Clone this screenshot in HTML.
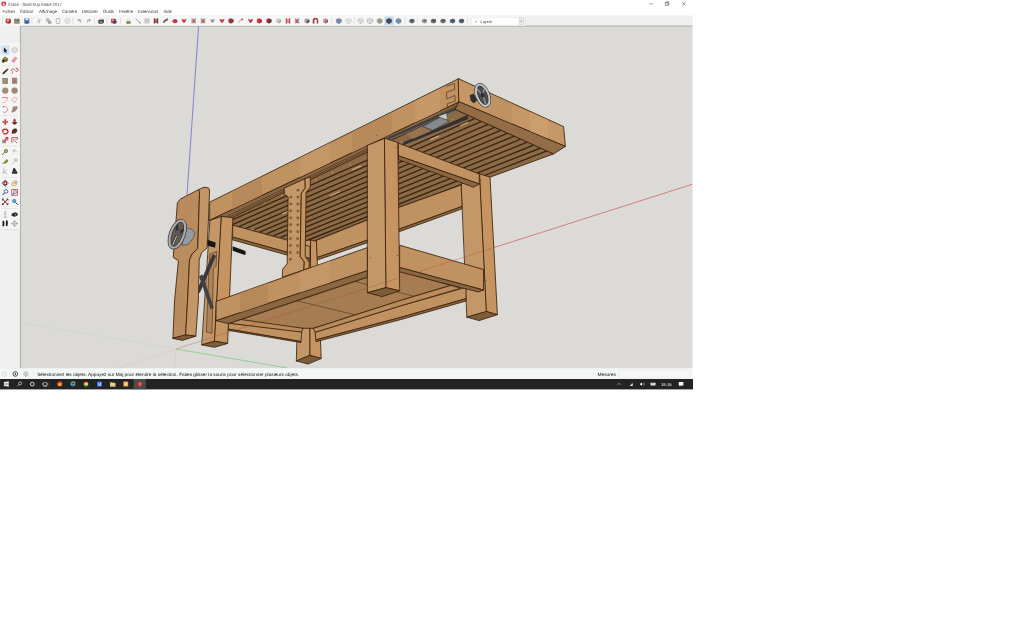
<!DOCTYPE html>
<html lang="fr"><head><meta charset="utf-8"><title>Établi - SketchUp Make 2017</title>
<style>
html,body{margin:0;padding:0;background:#fff}
body{width:1024px;height:621px;position:relative;overflow:hidden}
svg{position:absolute;left:0;top:0;display:block}
text{text-rendering:geometricPrecision;font-family:"Liberation Sans",sans-serif;fill:#2a2a2a}
.e{stroke:#3a220c;stroke-width:.85;stroke-linejoin:round;stroke-linecap:round}
</style></head><body>
<svg width="1024" height="621" viewBox="0 0 1024 621" style="opacity:.999">
<g id="chrome">
<rect x="0" y="0" width="692.4" height="15.5" fill="#fff"/>
<rect x="0" y="15.5" width="692.8" height="10.5" fill="#f0f0f0"/>
<rect x="0" y="26" width="20.5" height="342" fill="#f0f0f0"/>
<rect x="20" y="26" width="672.5" height="342" fill="#dbdad6"/>
<rect x="20" y="25.6" width="672.5" height=".9" fill="#a3a3a3"/>
<rect x="19.9" y="26" width=".8" height="342" fill="#a3a3a3"/>
<rect x="0" y="368" width="692.4" height="11" fill="#f5f6f6"/>
<rect x="0" y="379" width="693" height="10.4" fill="#232323"/>
</g>
<rect x="0" y="15.5" width="525.5" height="10.2" fill="#f6f6f6"/>
<rect x="0" y="43" width="19.9" height="187" fill="#f5f5f5"/>
<rect x="0" y="229.6" width="19.9" height=".5" fill="#d0d0d0"/>
<g id="title"><path d="M1.5 1.7h4.4v3.4l-2.1 1.5-2.3-1.3z" fill="#d8232a"/><path d="M2.7 2.8h2.1v.8h-1.3v.5h1.3v1.3h-2.1v-.8h1.3v-.4h-1.3z" fill="#fff" opacity=".9"/>
<g transform="translate(8.3 6.1) scale(0.3750)"><text x="0" y="0" font-size="12" textLength="142.7" lengthAdjust="spacingAndGlyphs" style="fill:#555">Établi - SketchUp Make 2017</text></g>
<path d="M649.2 3.8h3.6" stroke="#444" stroke-width=".5" fill="none"/>
<path d="M665.3 2.6h2.8v2.8h-2.8zM666 2.6v-.7h2.8v2.8h-.7" stroke="#333" stroke-width=".5" fill="none"/>
<path d="M682.1 2l3.4 3.4M685.5 2l-3.4 3.4" stroke="#333" stroke-width=".5" fill="none"/></g>
<g id="menu">
<g transform="translate(2.6 13.0) scale(0.3750)"><text x="0" y="0" font-size="12" textLength="33.1" lengthAdjust="spacingAndGlyphs" style="fill:#333">Fichier</text></g>
<g transform="translate(20.2 13.0) scale(0.3750)"><text x="0" y="0" font-size="12" textLength="34.9" lengthAdjust="spacingAndGlyphs" style="fill:#333">Édition</text></g>
<g transform="translate(39.0 13.0) scale(0.3750)"><text x="0" y="0" font-size="12" textLength="48.0" lengthAdjust="spacingAndGlyphs" style="fill:#333">Affichage</text></g>
<g transform="translate(62.0 13.0) scale(0.3750)"><text x="0" y="0" font-size="12" textLength="40.0" lengthAdjust="spacingAndGlyphs" style="fill:#333">Caméra</text></g>
<g transform="translate(82.0 13.0) scale(0.3750)"><text x="0" y="0" font-size="12" textLength="42.1" lengthAdjust="spacingAndGlyphs" style="fill:#333">Dessiner</text></g>
<g transform="translate(103.0 13.0) scale(0.3750)"><text x="0" y="0" font-size="12" textLength="29.3" lengthAdjust="spacingAndGlyphs" style="fill:#333">Outils</text></g>
<g transform="translate(119.0 13.0) scale(0.3750)"><text x="0" y="0" font-size="12" textLength="37.3" lengthAdjust="spacingAndGlyphs" style="fill:#333">Fenêtre</text></g>
<g transform="translate(138.0 13.0) scale(0.3750)"><text x="0" y="0" font-size="12" textLength="54.1" lengthAdjust="spacingAndGlyphs" style="fill:#333">Extensions</text></g>
<g transform="translate(163.6 13.0) scale(0.3750)"><text x="0" y="0" font-size="12" textLength="21.9" lengthAdjust="spacingAndGlyphs" style="fill:#333">Aide</text></g>
</g>
<g id="toolbar">
<g transform="translate(8.2 20.9) scale(.86) translate(-8.2 -20.9)" opacity=".88"><path d="M5.199999999999999 18.299999999999997h5.6l.6 .8v4l-2.6 1.2-3.6-1z" fill="#c5262c"/><path d="M6.799999999999999 19.5h2.2v1.8h-2.2z" fill="#f0d0d0"/><path d="M8.799999999999999 21.299999999999997l2.4-.6v2.4l-2.4 1z" fill="#8a1b20"/></g>
<g transform="translate(17 20.9) scale(.86) translate(-17 -20.9)" opacity=".88"><path d="M13.8 18.5h2.4l.8 1h3v4.4h-6.2z" fill="#6b6a3a"/><path d="M15.2 20.9h5.4l-1.4 3h-5.4z" fill="#8d8c52"/><path d="M17.6 17.9l2.4 1.4-2.4 1.4z" fill="#3a3a2a"/></g>
<g transform="translate(26.8 20.9) scale(.86) translate(-26.8 -20.9)" opacity=".88"><rect x="23.8" y="17.9" width="6" height="6" rx=".5" fill="#3465a8"/><rect x="25.0" y="17.9" width="3.6" height="2.2" fill="#dfe8f5"/><rect x="25.2" y="21.5" width="3.2" height="2.4" fill="#1e3f70"/></g>
<g transform="translate(39 20.9) scale(.86) translate(-39 -20.9)" opacity=".88"><path d="M36.4 22.5L41.6 19.299999999999997M38.4 17.9L39.8 23.9" stroke="#a8a8a8" stroke-width=".9" fill="none"/></g>
<g transform="translate(48.4 20.9) scale(.86) translate(-48.4 -20.9)" opacity=".88"><path d="M45.6 17.9h3l1 1v3h-4z" fill="#b4b4b4"/><path d="M47.8 20.299999999999997h3l1 1v3h-4z" fill="#9c9c9c"/></g>
<g transform="translate(58 20.9) scale(.86) translate(-58 -20.9)" opacity=".88"><rect x="56" y="18.099999999999998" width="4" height="5.8" rx=".5" fill="none" stroke="#a6a6a6" stroke-width=".9"/><rect x="57" y="17.599999999999998" width="2" height="1" fill="#a6a6a6"/></g>
<g transform="translate(67.5 20.9) scale(.86) translate(-67.5 -20.9)" opacity=".88"><circle cx="67.5" cy="20.9" r="2.9" fill="none" stroke="#ababab" stroke-width=".7"/><path d="M66.4 19.799999999999997l2.2 2.2m0-2.2l-2.2 2.2" stroke="#ababab" stroke-width=".7"/></g>
<g transform="translate(79.5 20.9) scale(.86) translate(-79.5 -20.9)" opacity=".88"><path d="M76.9 19.9l2.2-2v1.2c3 0 3.6 2.6 1.4 4.8.8-2-.2-2.8-1.4-2.8v1.2z" fill="#a9a9a9"/></g>
<g transform="translate(89 20.9) scale(.86) translate(-89 -20.9)" opacity=".88"><path d="M91.6 19.9l-2.2-2v1.2c-3 0-3.6 2.6-1.4 4.8-.8-2 .2-2.8 1.4-2.8v1.2z" fill="#a9a9a9"/></g>
<g transform="translate(101 20.9) scale(.86) translate(-101 -20.9)" opacity=".88"><path d="M97.8 20.299999999999997l2-1.6h3.6l1 1.4v3l-2 1.2h-3.8l-.8-1.2z" fill="#2d2d30"/><path d="M99.4 17.9h3.2l.6 1.8h-4.4z" fill="#d6d6d6"/><path d="M99.4 21.7h3.4v1.2h-3.4z" fill="#bdbdbd"/></g>
<g transform="translate(113.7 20.9) scale(.86) translate(-113.7 -20.9)" opacity=".88"><path d="M110.7 18.299999999999997h5l.8 .8v3.6l-2.2 1.4-3.6-.8z" fill="#c5262c"/><circle cx="115.10000000000001" cy="22.099999999999998" r="2.1" fill="#23305e"/><circle cx="112.7" cy="20.099999999999998" r=".9" fill="#f3d6d6"/></g>
<g transform="translate(128.5 20.9) scale(.86) translate(-128.5 -20.9)" opacity=".88"><rect x="126.1" y="20.7" width="4.8" height="3.2" fill="#a99a45"/><rect x="126.1" y="22.299999999999997" width="4.8" height="1.6" fill="#5c5a3a"/><path d="M127.3 20.7v-1.2a1.2 1.2 0 0 1 2.4 0v1.2" stroke="#d8cf8a" stroke-width=".7" fill="none"/></g>
<g transform="translate(138 20.9) scale(.86) translate(-138 -20.9)" opacity=".88"><path d="M135.2 18.5L140.4 23.099999999999998" stroke="#444" stroke-width=".6"/><rect x="139.8" y="22.5" width="1.2" height="1.2" fill="#333"/></g>
<g transform="translate(147 20.9) scale(.86) translate(-147 -20.9)" opacity=".88"><rect x="144" y="17.9" width="6" height="6" fill="#c9c9c9"/><path d="M144 19.9h6M144 21.9h6" stroke="#b4b4b4" stroke-width=".4"/></g>
<g transform="translate(156 20.9) scale(.86) translate(-156 -20.9)" opacity=".88"><path d="M153.4 17.9h1.6v6h-1.6zM157 17.9h1.6v6h-1.6z" fill="#4a2a2c"/><path d="M155 18.9h2v4.4h-2z" fill="#c3272d"/></g>
<g transform="translate(165.6 20.9) scale(.86) translate(-165.6 -20.9)" opacity=".88"><path d="M162.6 22.7c1-3 3-4.4 6-4.4l-.6 2c-2 .2-3.2 1.2-4 3z" fill="#4a2a2c"/><circle cx="167.4" cy="19.099999999999998" r="1.1" fill="#c3272d"/></g>
<g transform="translate(175 20.9) scale(.86) translate(-175 -20.9)" opacity=".88"><ellipse cx="175" cy="21.299999999999997" rx="3" ry="2.4" fill="#c3272d"/><ellipse cx="175.4" cy="20.299999999999997" rx="1.6" ry="1" fill="#8c1d22"/></g>
<g transform="translate(184 20.9) scale(.86) translate(-184 -20.9)" opacity=".88"><path d="M181 18.299999999999997l3 1.4 3-1.4-1 3-2 2.4-2-2.4z" fill="#c3272d"/><path d="M183 19.9h2l-1 2.6z" fill="#8c1d22"/></g>
<g transform="translate(193.7 20.9) scale(.86) translate(-193.7 -20.9)" opacity=".88"><path d="M191.1 17.9h1.6v6h-1.6zM194.7 17.9h1.6v6h-1.6z" fill="#9a9a9a"/><path d="M192.7 18.9h2v4.4h-2z" fill="#c3272d"/></g>
<g transform="translate(203 20.9) scale(.86) translate(-203 -20.9)" opacity=".88"><path d="M200.4 17.9h1.6v6h-1.6zM204 17.9h1.6v6h-1.6z" fill="#9a9a9a"/><path d="M202 18.9h2v4.4h-2z" fill="#c3272d"/></g>
<g transform="translate(212.5 20.9) scale(.86) translate(-212.5 -20.9)" opacity=".88"><path d="M209.5 18.299999999999997l3 1.4 3-1.4-1 3-2 2.4-2-2.4z" fill="#9a9a9a"/><path d="M211.5 19.9h2l-1 2.6z" fill="#777"/></g>
<g transform="translate(222 20.9) scale(.86) translate(-222 -20.9)" opacity=".88"><path d="M219 18.299999999999997l3 1.4 3-1.4-1 3-2 2.4-2-2.4z" fill="#c3272d"/><path d="M221 19.9h2l-1 2.6z" fill="#8c1d22"/></g>
<g transform="translate(231 20.9) scale(.86) translate(-231 -20.9)" opacity=".88"><path d="M228 18.9l2.6-1 3.2 1.2v3.2l-2.8 1.6-3-1.2z" fill="#8c1d22"/><path d="M230.8 21.099999999999998l3-1.4v2.6l-3 1.6z" fill="#4a2a2c"/></g>
<g transform="translate(240.6 20.9) scale(.86) translate(-240.6 -20.9)" opacity=".88"><path d="M237.6 22.7c1-3 3-4.4 6-4.4l-.6 2c-2 .2-3.2 1.2-4 3z" fill="#e6b3b5"/><circle cx="242.4" cy="19.099999999999998" r="1.1" fill="#c3272d"/></g>
<g transform="translate(250.6 20.9) scale(.86) translate(-250.6 -20.9)" opacity=".88"><path d="M247.6 18.299999999999997l3 1.4 3-1.4-1 3-2 2.4-2-2.4z" fill="#c3272d"/><path d="M249.6 19.9h2l-1 2.6z" fill="#8c1d22"/></g>
<g transform="translate(259.4 20.9) scale(.86) translate(-259.4 -20.9)" opacity=".88"><path d="M256.4 18.9l2.6-1 3.2 1.2v3.2l-2.8 1.6-3-1.2z" fill="#c3272d"/><path d="M259.2 21.099999999999998l3-1.4v2.6l-3 1.6z" fill="#8c1d22"/></g>
<g transform="translate(269 20.9) scale(.86) translate(-269 -20.9)" opacity=".88"><path d="M266 18.9l2.6-1 3.2 1.2v3.2l-2.8 1.6-3-1.2z" fill="#8c1d22"/><path d="M268.8 21.099999999999998l3-1.4v2.6l-3 1.6z" fill="#222"/></g>
<g transform="translate(278.7 20.9) scale(.86) translate(-278.7 -20.9)" opacity=".88"><path d="M275.7 18.9l2.6-1 3.2 1.2v3.2l-2.8 1.6-3-1.2z" fill="#c8c8c8"/><path d="M278.5 21.099999999999998l3-1.4v2.6l-3 1.6z" fill="#9a9a9a"/></g>
<g transform="translate(288 20.9) scale(.86) translate(-288 -20.9)" opacity=".88"><path d="M285.4 17.9h1.6v6h-1.6zM289 17.9h1.6v6h-1.6z" fill="#c3272d"/><path d="M287 18.9h2v4.4h-2z" fill="#9a9a9a"/></g>
<g transform="translate(297 20.9) scale(.86) translate(-297 -20.9)" opacity=".88"><path d="M294.4 17.9h1.6v6h-1.6zM298 17.9h1.6v6h-1.6z" fill="#9a9a9a"/><path d="M296 18.9h2v4.4h-2z" fill="#c3272d"/></g>
<g transform="translate(307 20.9) scale(.86) translate(-307 -20.9)" opacity=".88"><path d="M304 18.9l2.6-1 3.2 1.2v3.2l-2.8 1.6-3-1.2z" fill="#9a9a9a"/><path d="M306.8 21.099999999999998l3-1.4v2.6l-3 1.6z" fill="#4a2a2c"/></g>
<g transform="translate(315.6 20.9) scale(.86) translate(-315.6 -20.9)" opacity=".88"><path d="M312.6 23.9v-3.6a3 3 0 0 1 6 0v3.6h-1.6v-3.4a1.4 1.4 0 0 0-2.8 0v3.4z" fill="#8c1d22"/><path d="M312.6 23.9v-3.6a3 3 0 0 1 1-2.2" stroke="#4a2a2c" stroke-width=".6" fill="none"/></g>
<g transform="translate(325.6 20.9) scale(.86) translate(-325.6 -20.9)" opacity=".88"><path d="M322.6 18.9l2.6-1 3.2 1.2v3.2l-2.8 1.6-3-1.2z" fill="#9a9a9a"/><path d="M325.40000000000003 21.099999999999998l3-1.4v2.6l-3 1.6z" fill="#c3272d"/></g>
<g transform="translate(338.8 20.9) scale(.86) translate(-338.8 -20.9)" opacity=".88"><path d="M335.8 19.5l3-1.6 3 1.6v3l-3 1.6-3-1.6z" fill="#6f8aa6" stroke="#38506b" stroke-width=".45"/><path d="M335.8 19.5l3 1.4 3-1.4M338.8 20.9v3.2" stroke="#38506b" stroke-width=".5" fill="none"/></g>
<g transform="translate(348.6 20.9) scale(.86) translate(-348.6 -20.9)" opacity=".88"><path d="M345.6 19.5l3-1.6 3 1.6v3l-3 1.6-3-1.6z" fill="#f4f4f4" stroke="#9a9a9a" stroke-width=".45"/><path d="M345.6 19.5l3 1.4 3-1.4M348.6 20.9v3.2" stroke="#9a9a9a" stroke-width=".5" fill="none"/></g>
<g transform="translate(360.6 20.9) scale(.86) translate(-360.6 -20.9)" opacity=".88"><path d="M357.6 19.5l3-1.6 3 1.6v3l-3 1.6-3-1.6z" fill="#ededed" stroke="#8a8a8a" stroke-width=".45"/><path d="M357.6 19.5l3 1.4 3-1.4M360.6 20.9v3.2" stroke="#8a8a8a" stroke-width=".5" fill="none"/></g>
<g transform="translate(370 20.9) scale(.86) translate(-370 -20.9)" opacity=".88"><path d="M367 19.5l3-1.6 3 1.6v3l-3 1.6-3-1.6z" fill="#fafafa" stroke="#555" stroke-width=".45"/><path d="M367 19.5l3 1.4 3-1.4M370 20.9v3.2" stroke="#555" stroke-width=".5" fill="none"/></g>
<g transform="translate(379.7 20.9) scale(.86) translate(-379.7 -20.9)" opacity=".88"><path d="M376.7 19.5l3-1.6 3 1.6v3l-3 1.6-3-1.6z" fill="#9a9a8a" stroke="#6a6a5c" stroke-width=".45"/><path d="M376.7 19.5l3 1.4 3-1.4M379.7 20.9v3.2" stroke="#6a6a5c" stroke-width=".5" fill="none"/></g>
<rect x="384.4" y="16.4" width="9.2" height="9" fill="#c5dcf2"/>
<g transform="translate(389 20.9) scale(.86) translate(-389 -20.9)" opacity=".88"><path d="M386 19.5l3-1.6 3 1.6v3l-3 1.6-3-1.6z" fill="#3b3f45" stroke="#16181b" stroke-width=".45"/><path d="M386 19.5l3 1.4 3-1.4M389 20.9v3.2" stroke="#16181b" stroke-width=".5" fill="none"/></g>
<g transform="translate(398.5 20.9) scale(.86) translate(-398.5 -20.9)" opacity=".88"><path d="M395.5 19.5l3-1.6 3 1.6v3l-3 1.6-3-1.6z" fill="#6d8fb3" stroke="#3d5a7a" stroke-width=".45"/><path d="M395.5 19.5l3 1.4 3-1.4M398.5 20.9v3.2" stroke="#3d5a7a" stroke-width=".5" fill="none"/></g>
<g transform="translate(411.9 20.9) scale(.86) translate(-411.9 -20.9)" opacity=".88"><path d="M408.7 19.9l2.4-1.6 3.6.8.4 3-2.6 1.8-3.4-1z" fill="#55585c"/><path d="M410.5 20.299999999999997l2.2-.8 1.4.8-2 1z" fill="#2c2e31"/></g>
<g transform="translate(424.4 20.9) scale(.86) translate(-424.4 -20.9)" opacity=".88"><path d="M421.2 19.9l2.4-1.6 3.6.8.4 3-2.6 1.8-3.4-1z" fill="#8a8c8f"/><path d="M423.0 20.299999999999997l2.2-.8 1.4.8-2 1z" fill="#3c3e41"/></g>
<g transform="translate(433.5 20.9) scale(.86) translate(-433.5 -20.9)" opacity=".88"><path d="M430.3 19.9l2.4-1.6 3.6.8.4 3-2.6 1.8-3.4-1z" fill="#4f5256"/><path d="M432.1 20.299999999999997l2.2-.8 1.4.8-2 1z" fill="#2a2c2f"/></g>
<g transform="translate(443 20.9) scale(.86) translate(-443 -20.9)" opacity=".88"><path d="M439.8 19.9l2.4-1.6 3.6.8.4 3-2.6 1.8-3.4-1z" fill="#5b5e62"/><path d="M441.6 20.299999999999997l2.2-.8 1.4.8-2 1z" fill="#26282b"/></g>
<g transform="translate(452.5 20.9) scale(.86) translate(-452.5 -20.9)" opacity=".88"><path d="M449.3 19.9l2.4-1.6 3.6.8.4 3-2.6 1.8-3.4-1z" fill="#3f4f66"/><path d="M451.1 20.299999999999997l2.2-.8 1.4.8-2 1z" fill="#1f2a3a"/></g>
<g transform="translate(461.5 20.9) scale(.86) translate(-461.5 -20.9)" opacity=".88"><path d="M458.3 19.9l2.4-1.6 3.6.8.4 3-2.6 1.8-3.4-1z" fill="#3f4f66"/><path d="M460.1 20.299999999999997l2.2-.8 1.4.8-2 1z" fill="#1f2a3a"/></g>
<rect x="2.0" y="17.2" width=".4" height="7.6" fill="#c4c4c4"/>
<rect x="31.8" y="17.2" width=".4" height="7.6" fill="#c4c4c4"/>
<rect x="72.8" y="17.2" width=".4" height="7.6" fill="#c4c4c4"/>
<rect x="94.3" y="17.2" width=".4" height="7.6" fill="#c4c4c4"/>
<rect x="106.8" y="17.2" width=".4" height="7.6" fill="#c4c4c4"/>
<rect x="120.3" y="17.2" width=".4" height="7.6" fill="#c4c4c4"/>
<rect x="331.0" y="17.2" width=".4" height="7.6" fill="#c4c4c4"/>
<rect x="353.8" y="17.2" width=".4" height="7.6" fill="#c4c4c4"/>
<rect x="404.8" y="17.2" width=".4" height="7.6" fill="#c4c4c4"/>
<rect x="417.3" y="17.2" width=".4" height="7.6" fill="#c4c4c4"/>
<rect x="467.6" y="17.2" width=".4" height="7.6" fill="#c4c4c4"/>
<rect x="471.9" y="17.6" width="51.8" height="7.4" fill="#fff" stroke="#d9d9d9" stroke-width=".3"/>
<rect x="519" y="17.9" width="4.5" height="6.8" fill="#e9e9e9" stroke="#b5b5b5" stroke-width=".3"/><path d="M520.1 20.8l1.15 1.2 1.15-1.2" stroke="#666" stroke-width=".45" fill="none"/>
<g transform="translate(474.6 22.6) scale(0.3000)"><text x="0" y="0" font-size="12" style="fill:#444">✓</text></g><g transform="translate(480.6 22.7) scale(0.3250)"><text x="0" y="0" font-size="12" textLength="35.7" lengthAdjust="spacingAndGlyphs" style="fill:#333">Layer0</text></g>
<rect x="525.5" y="16" width=".4" height="9.4" fill="#d6d6d6"/>
</g>
<g id="ltool">
<rect x="0.8" y="45.4" width="9" height="9.2" fill="#cfe3f6"/>
<rect x="1.5" y="65" width="16.5" height=".4" fill="#cfcfcf"/>
<rect x="1.5" y="115.2" width="16.5" height=".4" fill="#cfcfcf"/>
<rect x="1.5" y="145.8" width="16.5" height=".4" fill="#cfcfcf"/>
<rect x="1.5" y="177.2" width="16.5" height=".4" fill="#cfcfcf"/>
<rect x="1.5" y="208.2" width="16.5" height=".4" fill="#cfcfcf"/>
<path d="M3.9000000000000004 47.4v5l1.2-1 .9 1.8.8-.4-.9-1.8h1.5z" fill="#1c1c1c"/>
<path d="M12.0 48.4l2.6-1.2 2.8 1.2v3.2l-2.8 1.4-2.6-1.4z" fill="#dcdcdc" stroke="#aaa" stroke-width=".4"/>
<path d="M2.2 59.0l3-2.4 3 2.2-1 3-4 .4z" fill="#6e6a2e"/><path d="M3.6 58.8l1.8-1.4 1.6 1.2z" fill="#d9cf7a"/><path d="M2.2 60.0h2v2.4h-2z" fill="#2a2a20"/>
<path d="M11.6 60.6l3.6-4 2.4 1.6-3.4 4.2z" fill="#e59aa8"/><path d="M11.6 60.6l2.6 1.8" stroke="#c05a70" stroke-width=".8"/>
<path d="M2.2 74.5l.8-2 4.4-4 1 1-4.2 4.2z" fill="#3a2422"/><path d="M6.4 69.3l1-.8 1 1-.9.9z" fill="#c3272d"/>
<path d="M11.6 73.9c2-1 1-3 0-3.4s0-2 2-1.4 2 3.4 4 2-1-3.4-2-3" stroke="#c3272d" stroke-width=".7" fill="none"/><path d="M16.0 68.7l1.6-.6-.4 1.6z" fill="#c3272d"/>
<rect x="2.6" y="78.2" width="5.2" height="5.6" fill="#9e8c78"/><rect x="2.6" y="78.2" width="5.2" height="5.6" fill="none" stroke="#7d6b58" stroke-width=".4"/>
<rect x="12.0" y="78.2" width="5.2" height="5.6" fill="#a08c7a"/><path d="M12.0 78.2h5.2" stroke="#c3272d" stroke-width=".6"/><path d="M13.6 83a2 2 0 0 1 2.4-2" stroke="#c3272d" stroke-width=".5" fill="none"/>
<circle cx="5.2" cy="90.6" r="2.9" fill="#a18f7b" stroke="#7d6b58" stroke-width=".4"/>
<circle cx="14.6" cy="90.6" r="2.9" fill="#a38c78" stroke="#8a5a50" stroke-width=".4"/><circle cx="14.6" cy="90.6" r=".5" fill="#c3272d"/>
<path d="M2.2 97.6h5.4c0 3-2.4 5-5.4 5.2" stroke="#d88a94" stroke-width=".6" fill="none"/><path d="M2.2 97.6l5.4 0" stroke="#c3272d" stroke-width=".4"/>
<path d="M12.0 100.6c0-2.6 3-4 5.4-2.6l-2.6 4.6z" stroke="#d88a94" stroke-width=".6" fill="none"/>
<path d="M3.2 106.80000000000001a3 3 0 1 1-.8 4.8" stroke="#d0707c" stroke-width=".7" fill="none"/><circle cx="3.2" cy="106.80000000000001" r=".6" fill="#c3272d"/>
<path d="M11.8 112.2l1.4-5.4 4.2-.4c0 3.4-2.4 5.6-5.6 5.8z" fill="#9a8878" stroke="#c3606a" stroke-width=".4"/>
<path d="M5.2 118.8l1.3 1.6h-.8v1.1h1.1v-.8l1.6 1.3-1.6 1.3v-.8h-1.1v1.1h.8l-1.3 1.6-1.3-1.6h.8v-1.1h-1.1v.8l-1.6-1.3 1.6-1.3v.8h1.1v-1.1h-.8z" fill="#c3272d"/>
<path d="M11.6 122.6l3-1.2 3 1.2-3 2.4z" fill="#5a3a34"/><path d="M13.6 121.8v-1.4h-.8l1.8-1.8 1.8 1.8h-.8v1.4z" fill="#c3272d"/>
<path d="M2.4000000000000004 131.39999999999998a2.8 2.4 0 1 1 1 2" stroke="#c3272d" stroke-width="1.3" fill="none"/><path d="M1.8000000000000003 131.6l1.4 1.6 .8-2z" fill="#c3272d"/>
<path d="M11.8 133.79999999999998c-.6-3.4 1.4-5.4 4.6-5.2l1 2.4-1.8 2.2z" fill="#4a2c28"/><path d="M14.0 131.6l2.8-.8" stroke="#c3272d" stroke-width=".8"/>
<rect x="2.2" y="139.6" width="3.8" height="3.6" fill="#9a8e80"/><path d="M4.8 140.39999999999998l3-3m0 0h-1.8m1.8 0v1.8" stroke="#c3272d" stroke-width=".7" fill="none"/><rect x="5.0" y="137.2" width="3.2" height="3.4" fill="#c3272d" opacity=".55"/>
<path d="M11.8 142.6v-5h5.6v2" stroke="#c3272d" stroke-width=".8" fill="none"/><path d="M13.4 142.6v-3.2h4" stroke="#8a8a8a" stroke-width=".6" fill="none"/><path d="M14.4 140.39999999999998l2.6 2.6" stroke="#c3272d" stroke-width=".7"/>
<circle cx="6.0" cy="151" r="2" fill="#7c7a2a"/><circle cx="6.0" cy="151" r=".8" fill="#e8e2a0"/><path d="M4.6000000000000005 152.2l-2.4 2.6" stroke="#3a3a1a" stroke-width=".8"/>
<path d="M12.2 151.6l2.4-2.2 2.6 2.2" stroke="#9a9a9a" stroke-width=".5" fill="none"/><path d="M13.0 154.6l1.2-2.2" stroke="#b8b8b8" stroke-width=".5"/><g transform="translate(13.6 152.2) scale(0.2167)"><text x="0" y="0" font-size="12" style="fill:#777">3</text></g>
<path d="M2.2 163.8l4.6-4.8 1.4 1.6c-.6 2.2-2.4 3.4-6 3.2z" fill="#7c7a2a"/><path d="M3.8000000000000003 162.8l2.6-2.6" stroke="#e8e2a0" stroke-width=".6"/>
<rect x="14.0" y="158.4" width="3.4" height="3.4" fill="#dedede" stroke="#bdbdbd" stroke-width=".3"/><path d="M12.2 164.20000000000002l2-2.4" stroke="#aaa" stroke-width=".5"/><g transform="translate(14.4 161.0) scale(0.2000)"><text x="0" y="0" font-size="12" style="fill:#999">A1</text></g>
<path d="M3.8000000000000003 167.8v4.6l3.6 1.4M3.8000000000000003 172.4l3-2.4" stroke="#8d8d8d" stroke-width=".5" fill="none"/><path d="M3.8000000000000003 172.4l-1 1.2" stroke="#c3272d" stroke-width=".5"/>
<path d="M11.8 173.8l1.4-5.4 1.4-.6 2.8 4.8-.4 1.2z" fill="#2c2c2e"/><path d="M13.6 171.4h1.8" stroke="#777" stroke-width=".5"/>
<ellipse cx="5.2" cy="183.2" rx="3" ry="1.4" fill="none" stroke="#c3272d" stroke-width=".9"/><ellipse cx="5.2" cy="183.2" rx="1.2" ry="3" fill="none" stroke="#3b2422" stroke-width=".9"/>
<path d="M12.0 185.79999999999998c-1-2 .2-4.6 2.4-5.2 1.8-.4 3 .4 3.2 1.8l-2 .4 1.6 1.4c-1.4 1.8-3.4 2.2-5.2 1.6z" fill="#ecdcae" stroke="#a08a50" stroke-width=".4"/><path d="M13.6 182.79999999999998h3" stroke="#c3272d" stroke-width=".5"/>
<circle cx="6.0" cy="191.4" r="1.9" fill="#e8f0fa" stroke="#2d5a98" stroke-width=".8"/><path d="M4.6000000000000005 192.8l-2.2 2.4" stroke="#25354f" stroke-width="1"/>
<rect x="11.8" y="189.6" width="5.6" height="5.6" fill="none" stroke="#c3272d" stroke-width=".7"/><circle cx="15.0" cy="192.0" r="1.5" fill="#e8f0fa" stroke="#2d5a98" stroke-width=".6"/><path d="M14.0 193.0l-1.6 1.8" stroke="#25354f" stroke-width=".8"/>
<path d="M2.4000000000000004 199.0l5.6 5.6m0-5.6l-5.6 5.6" stroke="#c3272d" stroke-width="1"/><path d="M2.4000000000000004 199.0h1.6m-1.6 0v1.6M8.0 199.0h-1.6m1.6 0v1.6M2.4000000000000004 204.60000000000002h1.6m-1.6 0v-1.6M8.0 204.60000000000002h-1.6m1.6 0v-1.6" stroke="#3b2422" stroke-width=".7" fill="none"/><circle cx="5.2" cy="201.8" r="1" fill="#2d5a98"/>
<circle cx="14.2" cy="201.0" r="2.1" fill="#3f83c2"/><path d="M15.6 202.60000000000002l2 2" stroke="#25354f" stroke-width="1"/><path d="M13.0 201.0h2.4" stroke="#d8e8f8" stroke-width=".6"/>
<circle cx="5.2" cy="212.0" r=".8" fill="#e0e0e0" stroke="#888" stroke-width=".3"/><path d="M5.2 212.8v2.4l-1.2 2.4M5.2 215.20000000000002l1.2 2.4M3.8000000000000003 213.8h2.8" stroke="#9a9a9a" stroke-width=".5" fill="none"/><path d="M4.6000000000000005 217.4h1.2" stroke="#c3272d" stroke-width=".5"/>
<path d="M11.6 213.8l3.4-1.6 2.6 1v2.2l-3 1.4-3-.8z" fill="#2d2d30"/><circle cx="15.4" cy="214.6" r=".9" fill="#8a8a8a"/>
<path d="M2.6 221.0c1-.6 1.8 0 1.8 1.6l-.2 3.2c-.2 1-1.6 1-1.8 0z" fill="#1e1e20"/><path d="M6.0 220.6c1-.6 1.8 0 1.8 1.6l-.2 3.2c-.2 1-1.6 1-1.8 0z" fill="#1e1e20"/>
<path d="M14.6 220.6l3 3-3 3-3-3z" fill="#f0f0f0" stroke="#8a8a8a" stroke-width=".5"/><path d="M14.6 220.4v6.4M11.399999999999999 223.6h6.4" stroke="#6a6a6a" stroke-width=".5"/><circle cx="14.6" cy="223.6" r=".9" fill="#fff" stroke="#555" stroke-width=".3"/>
</g>
<g id="status">
<rect x="0" y="368" width="693" height=".4" fill="#e6e6e6"/>
<circle cx="4.4" cy="374" r="2.3" fill="#f8f8f8" stroke="#b8b8b8" stroke-width=".4"/><path d="M4.4 373v1.6" stroke="#aaa" stroke-width=".4"/>
<circle cx="15.3" cy="374" r="2.3" fill="#fdfdfd" stroke="#2a2a2a" stroke-width=".8"/><path d="M15.3 372.8v2.4" stroke="#111" stroke-width=".9"/>
<circle cx="25.9" cy="374" r="2.3" fill="#ededed" stroke="#8d8d8d" stroke-width=".5"/><circle cx="25.9" cy="373.4" r=".6" fill="#8d8d8d"/><path d="M24.9 375.2a1 1 0 0 1 2 0" fill="#8d8d8d"/>
<path d="M33.3 372.4v3.2" stroke="#bbb" stroke-width=".4" stroke-dasharray=".5 .5"/>
<g transform="translate(37.2 375.5) scale(0.3833)"><text x="0" y="0" font-size="12" textLength="683.5" lengthAdjust="spacingAndGlyphs" style="fill:#111">Sélectionnez les objets. Appuyez sur Maj pour étendre la sélection. Faites glisser la souris pour sélectionner plusieurs objets.</text></g>
<path d="M593.3 372.4v3.2" stroke="#bbb" stroke-width=".4" stroke-dasharray=".5 .5"/>
<g transform="translate(597.4 375.5) scale(0.3833)"><text x="0" y="0" font-size="12" textLength="48.5" lengthAdjust="spacingAndGlyphs" style="fill:#111">Mesures</text></g>
<rect x="619" y="370" width="71" height="7.6" fill="#f7f7f7" stroke="#dcdcdc" stroke-width=".4"/>
</g>
<g id="taskbar">
<rect x="133.6" y="379" width="12.2" height="10.4" fill="#4b4b4b"/>
<path d="M3.9 382.1l2-.3v2h-2zM6.2 381.75l2.5-.4v2.45h-2.5zM3.9 384.2h2v2l-2-.3zM6.2 384.2h2.5v2.45l-2.5-.4z" fill="#fff"/>
<circle cx="20.2" cy="383.3" r="1.5" fill="none" stroke="#fff" stroke-width=".55"/><path d="M19.1 384.4l-1.7 1.8" stroke="#fff" stroke-width=".6"/>
<circle cx="32.3" cy="384.1" r="1.9" fill="none" stroke="#fff" stroke-width=".8"/>
<path d="M43.4 382.6h3.6v3h-3.6zM42.6 383v2.2M47.8 383v2.2M43.4 386.4h3.6" stroke="#e8e8e8" stroke-width=".5" fill="none"/>
<circle cx="59.8" cy="384.1" r="2.5" fill="#e8622a"/><circle cx="59.6" cy="384.5" r="1.4" fill="#f3b13a"/><path d="M57.5 383a2.5 2.5 0 0 1 4.6-.2c-1-.8-2.4-.6-3 .4z" fill="#c8312b"/>
<circle cx="73" cy="384.1" r="2.4" fill="#2f9fc9"/><circle cx="73" cy="384.2" r="1.1" fill="#232323"/><path d="M70.6 384.3h4.6" stroke="#7ed0a0" stroke-width=".7"/><path d="M70.8 382.6c1.6-1.6 4-1.4 4.8.2" stroke="#e7c54a" stroke-width=".5" fill="none"/>
<circle cx="86" cy="384.1" r="2.4" fill="#d8c43a"/><path d="M83.6 384.1a2.4 2.4 0 0 1 4.4-1.3h-2.2z" fill="#d94a38"/><path d="M84 385.4a2.4 2.4 0 0 0 3.4.7l-1-2z" fill="#3a9a4a"/><circle cx="86" cy="384.1" r="1" fill="#e8e8e8"/>
<rect x="97" y="381.6" width="5" height="5" rx=".4" fill="#2a6fd0"/><path d="M98.2 382.8h1v1h-1zM100 382.8h1v1h-1zM98.2 384.6h2.8v1h-2.8z" fill="#fff"/>
<path d="M110.2 382.2h2l.5.6h2.6v3.8h-5.1z" fill="#e9c75a"/><path d="M110.2 383.6h5.1v3h-5.1z" fill="#f2dc8a"/><path d="M110.2 385.4h5.1v1.2h-5.1z" fill="#5a7a9a" opacity=".35"/>
<rect x="123.4" y="381.6" width="4.8" height="5" rx=".3" fill="#f0a24a"/><path d="M124.6 382.8h2.4v2.6h-2.4z" fill="#f9d9a8"/>
<path d="M137.4 381.9h4.6v3.4l-2.2 1.6-2.4-1.4z" fill="#d8232a"/><path d="M138.6 383h2.2v.8h-1.4v.5h1.4v1.3h-2.2" stroke="#f6c8c8" stroke-width=".35" fill="none"/>
<rect x="56.5" y="389" width="6.6" height=".5" fill="#8ab4e8"/><rect x="135" y="389" width="9.4" height=".5" fill="#8ab4e8"/>
<path d="M617.6 384.8l1.5-1.5 1.5 1.5" stroke="#fff" stroke-width=".5" fill="none"/>
<path d="M629.4 386l3.2-3.6v3.6z" fill="#9a9a9a"/><path d="M630.4 386l2.2-2.4v2.4z" fill="#e8e8e8"/>
<path d="M640 383.4h.9l1.1-1v3.4l-1.1-1h-.9z" fill="#fff"/><path d="M642.8 383a1.6 1.6 0 0 1 0 2.2M643.7 382.4a2.6 2.6 0 0 1 0 3.4" stroke="#e0e0e0" stroke-width=".4" fill="none"/>
<rect x="650.6" y="382.8" width="4.8" height="2.8" rx=".4" fill="#fff"/><path d="M651.2 383.6h3.4M651.6 384.8h2.6" stroke="#444" stroke-width=".35"/>
<g transform="translate(661.0 385.5) scale(0.3250)"><text x="0" y="0" font-size="12" textLength="32.6" lengthAdjust="spacingAndGlyphs" style="fill:#fff">19:15</text></g>
<path d="M678.8 382h4.6v3.4h-2.6l-1 1v-1h-1z" fill="#fff"/>
</g>
<defs><clipPath id="vp"><rect x="20.7" y="26.5" width="671.8" height="341.4"/></clipPath></defs><g id="bench" clip-path="url(#vp)"><g style="filter:blur(.35px)">
<polyline points="198.6,26.0 187.0,195.0" fill="none" stroke="#5a5dc8" stroke-width="0.7" />
<polyline points="176.0,349.0 20.5,400.0" fill="none" stroke="#d8a8a8" stroke-width="0.4" stroke-dasharray="1 1"/>
<polyline points="176.0,349.0 20.5,322.5" fill="none" stroke="#a8cfa8" stroke-width="0.4" stroke-dasharray="1 1"/>
<polyline points="176.0,349.0 174.7,368.0" fill="none" stroke="#a8a8d8" stroke-width="0.4" stroke-dasharray="1 1"/>
<polyline points="176.0,349.0 287.5,368.0" fill="none" stroke="#86cc86" stroke-width="0.8" />
<polyline points="492.0,248.2 692.5,184.2" fill="none" stroke="#cc5a5a" stroke-width="0.7" />
<polygon points="210.0,220.0 459.2,101.8 455.3,109.5 553.6,153.9 490.5,177.0 461.7,184.6 400.0,206.6 316.0,240.0 316.0,246.0" fill="#8c6a46" class="e" />
<g stroke="#3a2616" stroke-width="1.35" fill="none">
<path d="M224.1 223.5L468.4 115.4"/>
<path d="M231.2 225.2L475.0 118.4"/>
<path d="M238.3 226.9L481.5 121.3"/>
<path d="M245.3 228.7L488.1 124.3"/>
<path d="M252.4 230.4L494.6 127.3"/>
<path d="M259.5 232.1L501.2 130.2"/>
<path d="M266.5 233.9L507.7 133.2"/>
<path d="M273.6 235.6L514.3 136.1"/>
<path d="M280.7 237.3L520.8 139.1"/>
<path d="M287.7 239.1L527.4 142.1"/>
<path d="M294.8 240.8L533.9 145.0"/>
<path d="M301.9 242.5L540.5 148.0"/>
<path d="M308.9 244.3L547.0 150.9"/>
</g>
<circle cx="230.0" cy="218.2" r=".7" fill="#c4a07a"/>
<circle cx="247.1" cy="210.6" r=".7" fill="#c4a07a"/>
<circle cx="264.3" cy="202.9" r=".7" fill="#c4a07a"/>
<circle cx="281.4" cy="195.3" r=".7" fill="#c4a07a"/>
<circle cx="298.5" cy="187.7" r=".7" fill="#c4a07a"/>
<circle cx="315.6" cy="180.1" r=".7" fill="#c4a07a"/>
<circle cx="332.7" cy="172.5" r=".7" fill="#c4a07a"/>
<circle cx="349.9" cy="164.9" r=".7" fill="#c4a07a"/>
<circle cx="367.0" cy="157.3" r=".7" fill="#c4a07a"/>
<circle cx="384.1" cy="149.7" r=".7" fill="#c4a07a"/>
<circle cx="401.2" cy="142.1" r=".7" fill="#c4a07a"/>
<circle cx="418.3" cy="134.4" r=".7" fill="#c4a07a"/>
<circle cx="435.5" cy="126.8" r=".7" fill="#c4a07a"/>
<circle cx="452.6" cy="119.2" r=".7" fill="#c4a07a"/>
<polygon points="210.0,220.0 459.2,101.8 455.3,109.5 214.0,226.5" fill="#8a6744" class="e" />
<polyline points="212.0,223.4 457.2,105.6" fill="none" stroke="#4a3320" stroke-width="0.7" />
<polyline points="213.0,225.0 456.2,107.6" fill="none" stroke="#4a3320" stroke-width="0.7" />
<polyline points="387.7,138.8 455.6,109.2" fill="none" stroke="#3c3e42" stroke-width="2.8" />
<polyline points="389.0,139.6 455.6,110.4" fill="none" stroke="#8a8d92" stroke-width="0.5" />
<polyline points="404.0,143.4 468.0,117.6" fill="none" stroke="#303236" stroke-width="3" />
<polygon points="423.0,126.4 440.5,117.0 449.3,121.4 433.0,130.2" fill="#85888d" class="e" style="stroke:#2c2d30;stroke-width:.5"/>
<polygon points="438.0,116.6 446.4,113.0 447.6,119.8 444.6,119.0" fill="#c9cbce" class="e" style="stroke:#2c2d30;stroke-width:.4"/>
<polyline points="414.2,130.0 414.2,135.6" fill="none" stroke="#3a2718" stroke-width="0.6" />
<polygon points="406.0,134.0 422.0,127.0 430.5,131.2 413.0,138.8" fill="#9a7450" class="" />
<polyline points="474.0,114.0 484.0,109.5" fill="none" stroke="#c9a57a" stroke-width="1.2" />
<polyline points="460.0,126.0 468.0,122.4" fill="none" stroke="#c9a57a" stroke-width="1.2" />
<polyline points="430.0,140.0 439.0,135.9" fill="none" stroke="#c9a57a" stroke-width="1.2" />
<polyline points="330.0,196.0 340.0,191.5" fill="none" stroke="#c9a57a" stroke-width="1.2" />
<polyline points="352.0,170.0 361.0,165.9" fill="none" stroke="#c9a57a" stroke-width="1.2" />
<polyline points="282.0,214.0 291.0,209.9" fill="none" stroke="#c9a57a" stroke-width="1.2" />
<polyline points="248.0,232.0 254.0,229.3" fill="none" stroke="#c9a57a" stroke-width="1.2" />
<polygon points="210.0,202.0 458.5,78.7 459.2,101.8 210.0,220.0" fill="#c09161" class="e" />
<polygon points="232.0,191.5 262.0,176.7 262.0,195.0 232.0,209.2" fill="#b78859" class="" />
<polygon points="300.0,157.9 330.0,143.1 330.0,162.8 300.0,177.0" fill="#c59667" class="" />
<polygon points="352.0,132.3 392.0,112.5 392.0,133.4 352.0,152.4" fill="#b8895a" class="" />
<polygon points="415.0,101.1 440.0,88.8 440.0,110.7 415.0,122.5" fill="#c69768" class="" />
<polyline points="446.3,86.3 454.4,83.4 454.7,89.5 446.6,92.1 446.9,98.9 454.7,95.3 455.3,101.1 447.3,103.7 447.6,107.0" fill="none" stroke="#40280f" stroke-width="0.6" />
<circle cx="376.3" cy="135.5" r=".8" fill="#8a6038"/><circle cx="216" cy="213" r=".6" fill="#8a6038"/>
<polygon points="458.5,78.7 563.6,126.6 565.4,146.4 459.2,101.8" fill="#c69766" class="e" />
<polygon points="459.2,101.8 565.4,146.4 553.6,153.9 455.3,109.5" fill="#926d47" class="e" />
<polygon points="490.0,93.7 512.0,103.7 512.0,123.4 490.0,114.1" fill="#c09162" class="" />
<polygon points="530.0,111.9 548.0,120.1 548.0,138.5 530.0,130.9" fill="#cd9e6d" class="" />
<polygon points="316.3,240.4 400.0,207.0 461.7,184.8 462.8,206.2 400.0,228.8 317.0,257.6" fill="#c09161" class="e" />
<polygon points="317.0,257.6 400.0,228.8 462.8,206.2 462.8,208.6 400.0,231.4 317.4,260.0" fill="#8a6741" class="e" />
<polygon points="299.5,241.0 311.0,240.0 309.9,327.0 309.9,355.4 296.7,361.0" fill="#c39768" class="e" />
<polygon points="311.0,240.0 316.4,241.4 321.2,358.5 309.9,355.4 309.9,327.0" fill="#c59460" class="e" />
<polygon points="296.7,361.0 308.0,364.1 321.2,358.5 309.9,355.4" fill="#7d5c3a" class="e" />
<polygon points="461.5,184.0 479.9,174.0 486.7,311.6 467.2,317.2" fill="#c39768" class="e" />
<polygon points="479.9,174.0 490.0,177.1 497.4,314.7 486.7,311.6" fill="#c59460" class="e" />
<polygon points="467.2,317.2 479.1,320.6 497.4,314.7 486.7,311.6" fill="#7d5c3a" class="e" />
<polygon points="233.0,225.2 310.0,246.4 310.0,258.6 233.0,237.2" fill="#c09161" class="e" />
<polygon points="233.0,237.2 310.0,258.6 310.0,261.4 233.0,240.0" fill="#8a6741" class="e" />
<polygon points="398.6,143.2 479.3,174.0 479.3,184.0 398.6,155.8" fill="#c09161" class="e" />
<polygon points="398.6,155.8 479.3,184.0 473.6,187.2 398.6,159.6" fill="#8a6741" class="e" />
<polygon points="315.5,332.2 400.0,306.0 466.0,287.4 466.0,298.7 426.5,310.0 400.0,317.6 316.2,339.8" fill="#c09161" class="e" />
<polygon points="316.2,339.8 400.0,317.6 466.0,298.7 466.0,301.0 400.0,319.8 316.4,341.6" fill="#8a6741" class="e" />
<polygon points="228.8,323.3 240.8,319.5 367.0,277.4 400.7,271.4 450.7,285.4 400.0,300.6 313.6,328.3 303.0,328.3" fill="#a67c52" class="e" />
<polyline points="296.7,300.7 355.3,314.9" fill="none" stroke="#3a2818" stroke-width="0.5" />
<polyline points="354.5,281.4 414.5,296.2" fill="none" stroke="#3a2818" stroke-width="0.5" />
<polygon points="228.8,323.3 240.8,319.5 303.0,328.3 301.7,332.1" fill="#b88a5c" class="e" />
<polygon points="313.6,328.3 400.0,300.6 450.7,285.4 460.8,288.2 400.0,306.0 315.5,332.2" fill="#b88a5c" class="e" />
<polygon points="228.8,323.3 301.7,332.1 301.0,341.5 228.8,329.2" fill="#c09161" class="e" />
<polygon points="228.8,329.2 301.0,341.5 301.0,342.6 228.8,330.4" fill="#8a6741" class="e" />
<polygon points="284.5,188.0 305.2,178.6 305.2,188.0 301.3,193.4 300.2,256.5 304.3,261.9 303.8,270.0 282.2,277.2 282.7,269.1 287.2,263.7 288.1,197.0 284.5,194.0" fill="#c39768" class="e" />
<polygon points="305.2,178.6 310.3,176.8 310.3,187.0 306.1,192.5 305.2,256.5 309.2,261.9 309.2,267.8 303.8,270.0 304.3,261.9 300.2,256.5 301.3,193.4 305.2,188.0" fill="#c59460" class="e" />
<g fill="#94704a" stroke="#5a3c20" stroke-width=".5">
<circle cx="290.8" cy="197.0" r="1.1"/>
<circle cx="298.0" cy="190.2" r="1.1"/>
<circle cx="290.8" cy="203.9" r="1.1"/>
<circle cx="297.9" cy="197.1" r="1.1"/>
<circle cx="290.7" cy="210.8" r="1.1"/>
<circle cx="297.9" cy="204.0" r="1.1"/>
<circle cx="290.7" cy="217.8" r="1.1"/>
<circle cx="297.9" cy="211.0" r="1.1"/>
<circle cx="290.6" cy="224.7" r="1.1"/>
<circle cx="297.8" cy="217.9" r="1.1"/>
<circle cx="290.6" cy="231.6" r="1.1"/>
<circle cx="297.8" cy="224.8" r="1.1"/>
<circle cx="290.5" cy="238.5" r="1.1"/>
<circle cx="297.7" cy="231.7" r="1.1"/>
<circle cx="290.4" cy="245.4" r="1.1"/>
<circle cx="297.6" cy="238.6" r="1.1"/>
<circle cx="290.4" cy="252.4" r="1.1"/>
<circle cx="297.6" cy="245.6" r="1.1"/>
<circle cx="290.4" cy="259.3" r="1.1"/>
<circle cx="297.6" cy="252.5" r="1.1"/>
</g>
<polygon points="210.3,220.2 221.6,216.4 214.8,341.2 202.1,344.9" fill="#c39768" class="e" />
<polygon points="221.6,216.4 232.9,217.7 227.6,343.5 214.8,341.2" fill="#c59460" class="e" />
<polygon points="202.1,344.9 214.4,347.3 227.6,343.5 214.8,341.2" fill="#7d5c3a" class="e" />
<polygon points="210.2,254.0 216.6,251.5 216.2,266.0 213.4,268.5 212.0,333.4 206.4,332.0 209.0,268.0" fill="#b08459" class="e" style="stroke-width:.55"/>
<polygon points="216.3,301.3 367.5,247.5 367.5,270.6 216.3,320.6" fill="#c09161" class="e" />
<polygon points="216.3,320.6 367.5,270.6 367.5,277.0 228.8,323.4" fill="#8a6741" class="e" />
<polygon points="240.0,293.3 268.0,283.3 268.0,303.1 240.0,312.4" fill="#b78859" class="" />
<polygon points="300.0,271.9 330.0,261.2 330.0,282.6 300.0,292.5" fill="#c59667" class="" />
<polygon points="400.0,245.3 483.5,269.5 483.5,290.0 400.0,267.6" fill="#c09161" class="e" />
<polygon points="400.0,267.6 483.5,290.0 478.5,292.0 400.0,272.0" fill="#8a6741" class="e" />
<polygon points="367.6,145.3 384.8,138.3 386.3,287.7 367.7,292.7" fill="#c39768" class="e" />
<polygon points="384.8,138.3 397.8,142.6 399.7,290.8 386.3,287.7" fill="#c59460" class="e" />
<polygon points="367.7,292.7 382.1,296.6 399.7,290.8 386.3,287.7" fill="#7d5c3a" class="e" />
<g fill="#5a3c22"><circle cx="370.4" cy="257.8" r=".5"/><circle cx="397.4" cy="255.4" r=".5"/><circle cx="395.6" cy="147.6" r=".5"/><circle cx="481" cy="180" r=".5"/><circle cx="486" cy="280.6" r=".5"/></g>
<polygon points="206.7,239.4 215.7,242.4 215.0,247.8 207.2,245.4" fill="#161617" class="" />
<polygon points="232.6,246.2 244.8,250.8 244.8,255.0 232.6,250.8" fill="#161617" class="" />
<ellipse cx="244.8" cy="252.9" rx="1" ry="2.1" fill="#242425"/>
<polygon points="212.6,254.2 216.0,256.0 199.8,293.0 196.8,290.6" fill="#39393b" class="" />
<polygon points="199.0,276.4 202.4,274.2 213.8,307.6 210.6,309.6" fill="#424244" class="" />
<polygon points="177.6,202.6 180.7,198.8 199.0,189.4 199.6,192.0 197.7,248.5 192.0,254.0 189.5,260.0 187.6,300.0 185.6,335.0 172.9,338.4 174.6,300.0 178.4,260.7 173.2,257.5 173.8,250.0" fill="#ba8b5c" class="e" />
<polygon points="199.0,189.4 204.0,187.3 208.4,187.8 209.6,190.0 208.4,221.5 207.1,247.8 201.5,252.9 199.2,260.0 198.4,300.0 195.8,336.2 185.6,335.0 187.6,300.0 189.5,260.0 192.0,254.0 197.7,248.5 199.6,192.0" fill="#c49565" class="e" />
<polygon points="172.9,338.4 182.5,340.4 195.8,336.2 185.6,335.0" fill="#7d5c3a" class="e" />
<polygon points="185.4,227.5 192.2,229.4 194.8,232.6 193.5,237.8 188.3,244.2 182.5,245.5" fill="#979a9f" class="e" style="stroke:#3c3d40;stroke-width:.6"/>
<g transform="rotate(20 177.3 234.2)">
<ellipse cx="177.3" cy="234.2" rx="6.6" ry="14.2" fill="#6a5a4a" stroke="#35363a" stroke-width="3.6"/>
<path d="M177.3 234.2L173 224M177.3 234.2L182.4 227M177.3 234.2L176.4 246" stroke="#2f3033" stroke-width="2.6"/>
<path d="M177.3 236L176.6 246" stroke="#c9cbcf" stroke-width="1"/>
<ellipse cx="177.3" cy="234.2" rx="6.6" ry="14.2" fill="none" stroke="#a9abb0" stroke-width="2.2"/>
<ellipse cx="177.3" cy="233" rx="2.4" ry="3.2" fill="#55575b"/>
</g>
<polygon points="469.6,95.2 473.6,93.6 477.4,100.4 473.6,103.2 470.6,100.6" fill="#2e2f31" class="" />
<g transform="rotate(-22 482.7 95.3)">
<ellipse cx="482.7" cy="95.3" rx="5.8" ry="11.2" fill="#4a4b4e" stroke="#35363a" stroke-width="3.2"/>
<path d="M482.7 95.3L479.6 87M482.7 95.3L486.4 90M482.7 95.3L482.4 105" stroke="#8d8f93" stroke-width="1.5"/>
<ellipse cx="482.7" cy="95.3" rx="5.8" ry="11.2" fill="none" stroke="#c6c8cc" stroke-width="1.9"/>
<ellipse cx="482.7" cy="95" rx="1.8" ry="2.6" fill="#2e2f31"/>
</g>
<polyline points="176.0,349.0 492.0,248.2" fill="none" stroke="#b04a32" stroke-width="0.6" opacity=".55"/>
</g></g>
</svg></body></html>
